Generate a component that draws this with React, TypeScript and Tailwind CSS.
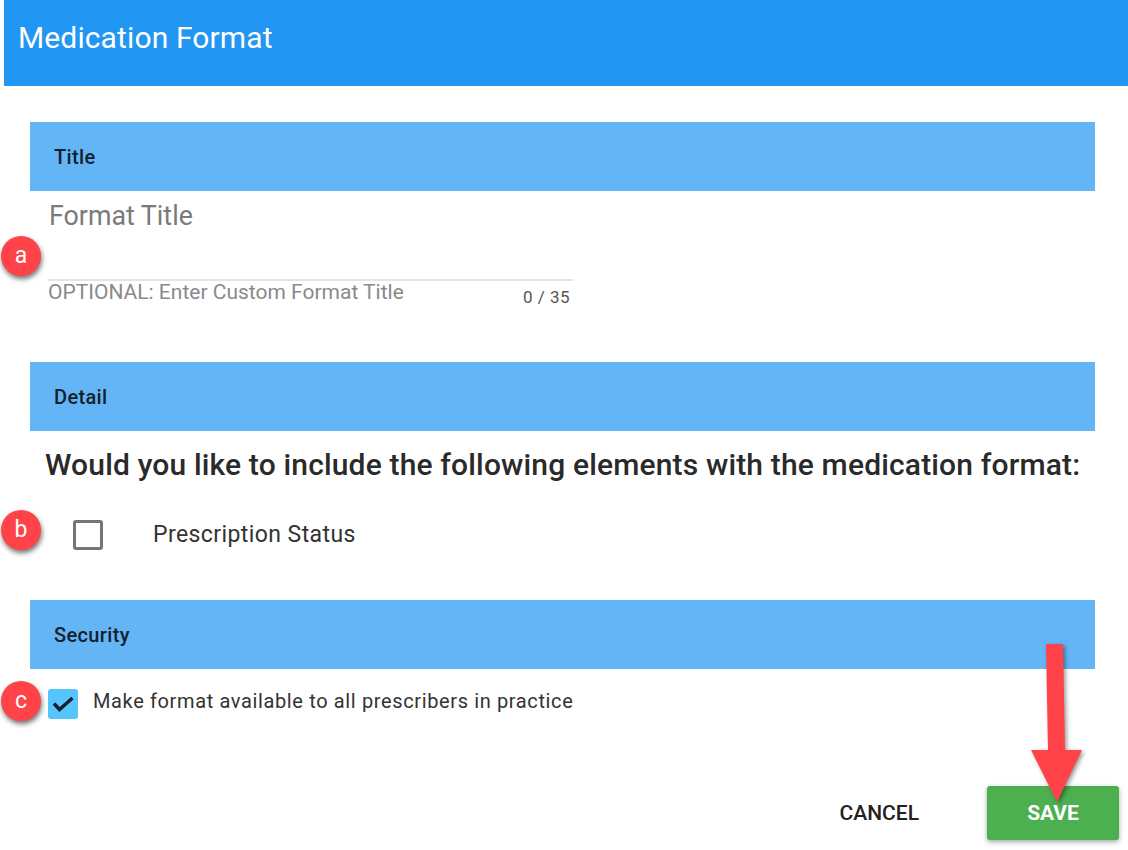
import React from "react";

function Bar({ label }: { label: string }) {
  return (
    <div className="h-[69px] bg-[#64b5f6] flex items-center pl-6 text-[20px] font-medium tracking-[0.35px] text-[#14202c]">
      {label}
    </div>
  );
}

function Badge({ letter, top }: { letter: string; top: string }) {
  return (
    <div
      className={`absolute left-[1px] ${top} w-10 h-10 rounded-full bg-[#ff4348] text-white flex items-center justify-center text-[23px] shadow-[1px_3px_5px_rgba(0,0,0,0.55)]`}
    >
      {letter}
    </div>
  );
}

export default function App() {
  return (
    <div className="relative w-[1128px] h-[850px] overflow-hidden bg-white font-['Roboto',sans-serif] pl-1">
      <header className="h-[86px] bg-[#2196f3] text-white text-[30px] tracking-[0.12px] leading-[75px] pl-[14px]">
        Medication Format
      </header>

      <main className="pl-[26px] pr-[33px] pt-9">
        <Bar label="Title" />
        <section className="h-[171px] pl-[18px]">
          <div className="pt-[8px] text-[26.8px] leading-[34px] text-[#7a7a7a] pl-[1px]">Format Title</div>
          <div className="mt-[46px] w-[525px] border-t-2 border-[#e4e4e4]" />
          <div className="w-[525px] flex justify-between pr-[3px]">
            <span className="text-[21px] leading-[22px] text-[#8a8a8a]">OPTIONAL: Enter Custom Format Title</span>
            <span className="text-[17px] leading-[22px] pt-[5px] text-[#555555] tracking-[0.5px]">0 / 35</span>
          </div>
        </section>

        <Bar label="Detail" />
        <section className="h-[169px]">
          <h2 className="pl-[15px] pt-[16px] text-[30px] leading-[36px] font-medium text-[#2a2a2a] tracking-[0.16px] whitespace-nowrap">
            Would you like to include the following elements with the medication format:
          </h2>
          <div className="flex items-center pl-[43px] pt-[34px]">
            <div className="w-[30px] h-[30px] rounded-[3px] border-[3px] border-[#757575]" />
            <span className="ml-[50px] text-[23px] leading-[36px] text-[#333333] tracking-[0.42px]">Prescription Status</span>
          </div>
        </section>

        <Bar label="Security" />
        <section className="flex items-center pl-[18px] pt-[20px]">
          <div className="w-[30px] h-[30px] rounded-[3px] bg-[#56c5fe]">
            <svg width="30" height="30" viewBox="0 0 30 30" fill="none" stroke="#14202c" strokeWidth="3.4">
              <path d="M6 14.5 L11.5 20.5 L24.5 9" />
            </svg>
          </div>
          <span className="ml-[15px] text-[20px] leading-[30px] text-[#333333] tracking-[0.63px] -mt-[7px]">
            Make format available to all prescribers in practice
          </span>
        </section>

        <div className="flex justify-end items-center mt-[67px] -mr-6 gap-[68px]">
          <span className="text-[21px] font-medium text-[#212121] translate-y-[1px]">CANCEL</span>
          <div className="w-[132px] h-[54px] rounded-[3px] bg-[#4caf50] text-white text-[21px] font-bold flex items-center justify-center pt-[2px] shadow-[0_2px_5px_rgba(0,0,0,0.35)]">
            SAVE
          </div>
        </div>
      </main>

      <Badge letter="a" top="top-[236px]" />
      <Badge letter="b" top="top-[510px]" />
      <Badge letter="c" top="top-[681px]" />

      <svg className="absolute left-[1020px] top-[635px]" width="75" height="180" viewBox="1020 635 75 180" style={{ filter: "drop-shadow(2px 2px 2px rgba(0,0,0,0.4))" }}>
        <path d="M1046 644 L1063 644 L1065 750 L1082 750 L1057 802 L1031 750 L1048 750 Z" fill="#ff4348" />
      </svg>
    </div>
  );
}
